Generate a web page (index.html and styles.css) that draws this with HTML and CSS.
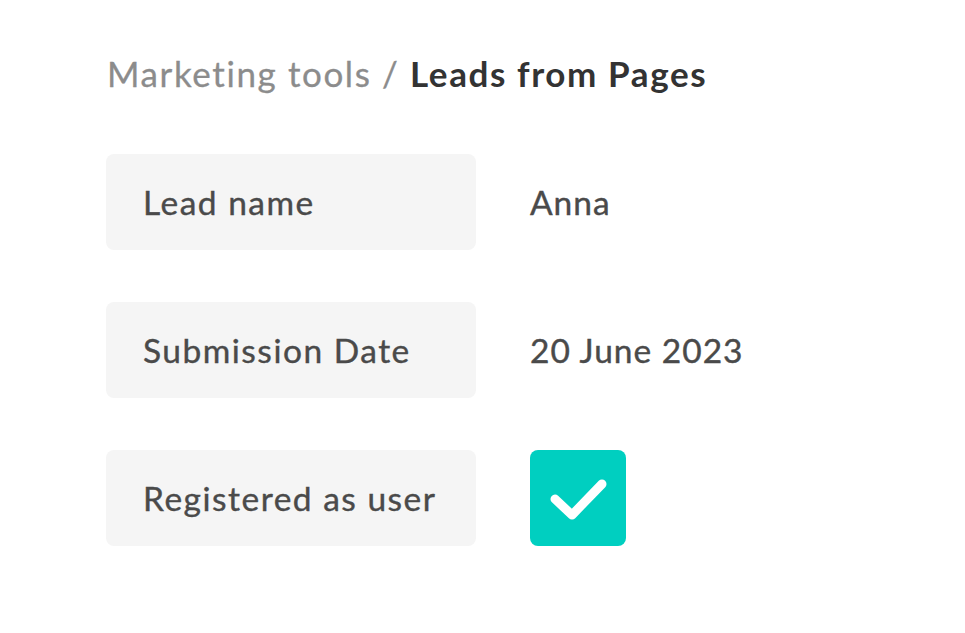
FILE: index.html
```html
<!DOCTYPE html>
<html>
<head>
<meta charset="utf-8">
<link rel="stylesheet" href="styles.css">
</head>
<body>
<main class="page">
  <h1 class="crumbs"><span class="crumb-parent">Marketing tools / </span><span class="crumb-current">Leads from Pages</span></h1>
  <div class="fields">
    <div class="row">
      <div class="label">Lead name</div>
      <div class="value">Anna</div>
    </div>
    <div class="row">
      <div class="label">Submission Date</div>
      <div class="value">20 June 2023</div>
    </div>
    <div class="row">
      <div class="label">Registered as user</div>
      <div class="value">
        <span class="check">
          <svg width="96" height="96" viewBox="0 0 96 96"><path d="M25 49 L42 65 L72 34" fill="none" stroke="#fff" stroke-width="9" stroke-linecap="round" stroke-linejoin="round"/></svg>
        </span>
      </div>
    </div>
  </div>
</main>
</body>
</html>
```
FILE: styles.css
```css
html, body { margin: 0; padding: 0; background: #fff; }
body { font-family: "Lato", "Noto Sans", sans-serif; }
.page { padding: 50px 0 0 106px; }
.crumbs { margin: 0; font-size: 35px; line-height: 46px; font-weight: 400; padding-left: 1px; letter-spacing: 1.6px; }
.crumb-parent { color: #8c8c8c; -webkit-text-stroke: 0.3px #8c8c8c; }
.crumb-current { color: #333; font-weight: 700; }
.fields { margin-top: 58px; display: flex; flex-direction: column; gap: 52px; }
.row { display: flex; align-items: center; gap: 54px; }
.label { width: 333px; height: 96px; padding-left: 37px; background: #f5f5f5; border-radius: 8px; display: flex; align-items: center; font-size: 33.5px; color: #4a4a4a; letter-spacing: 1.5px; -webkit-text-stroke: 0.4px #4a4a4a; }
.value { font-size: 33.5px; color: #4a4a4a; letter-spacing: 1px; -webkit-text-stroke: 0.4px #4a4a4a; }
.check { display: block; width: 96px; height: 96px; background: #00cfc0; border-radius: 8px; }
.check svg { display: block; }
```
